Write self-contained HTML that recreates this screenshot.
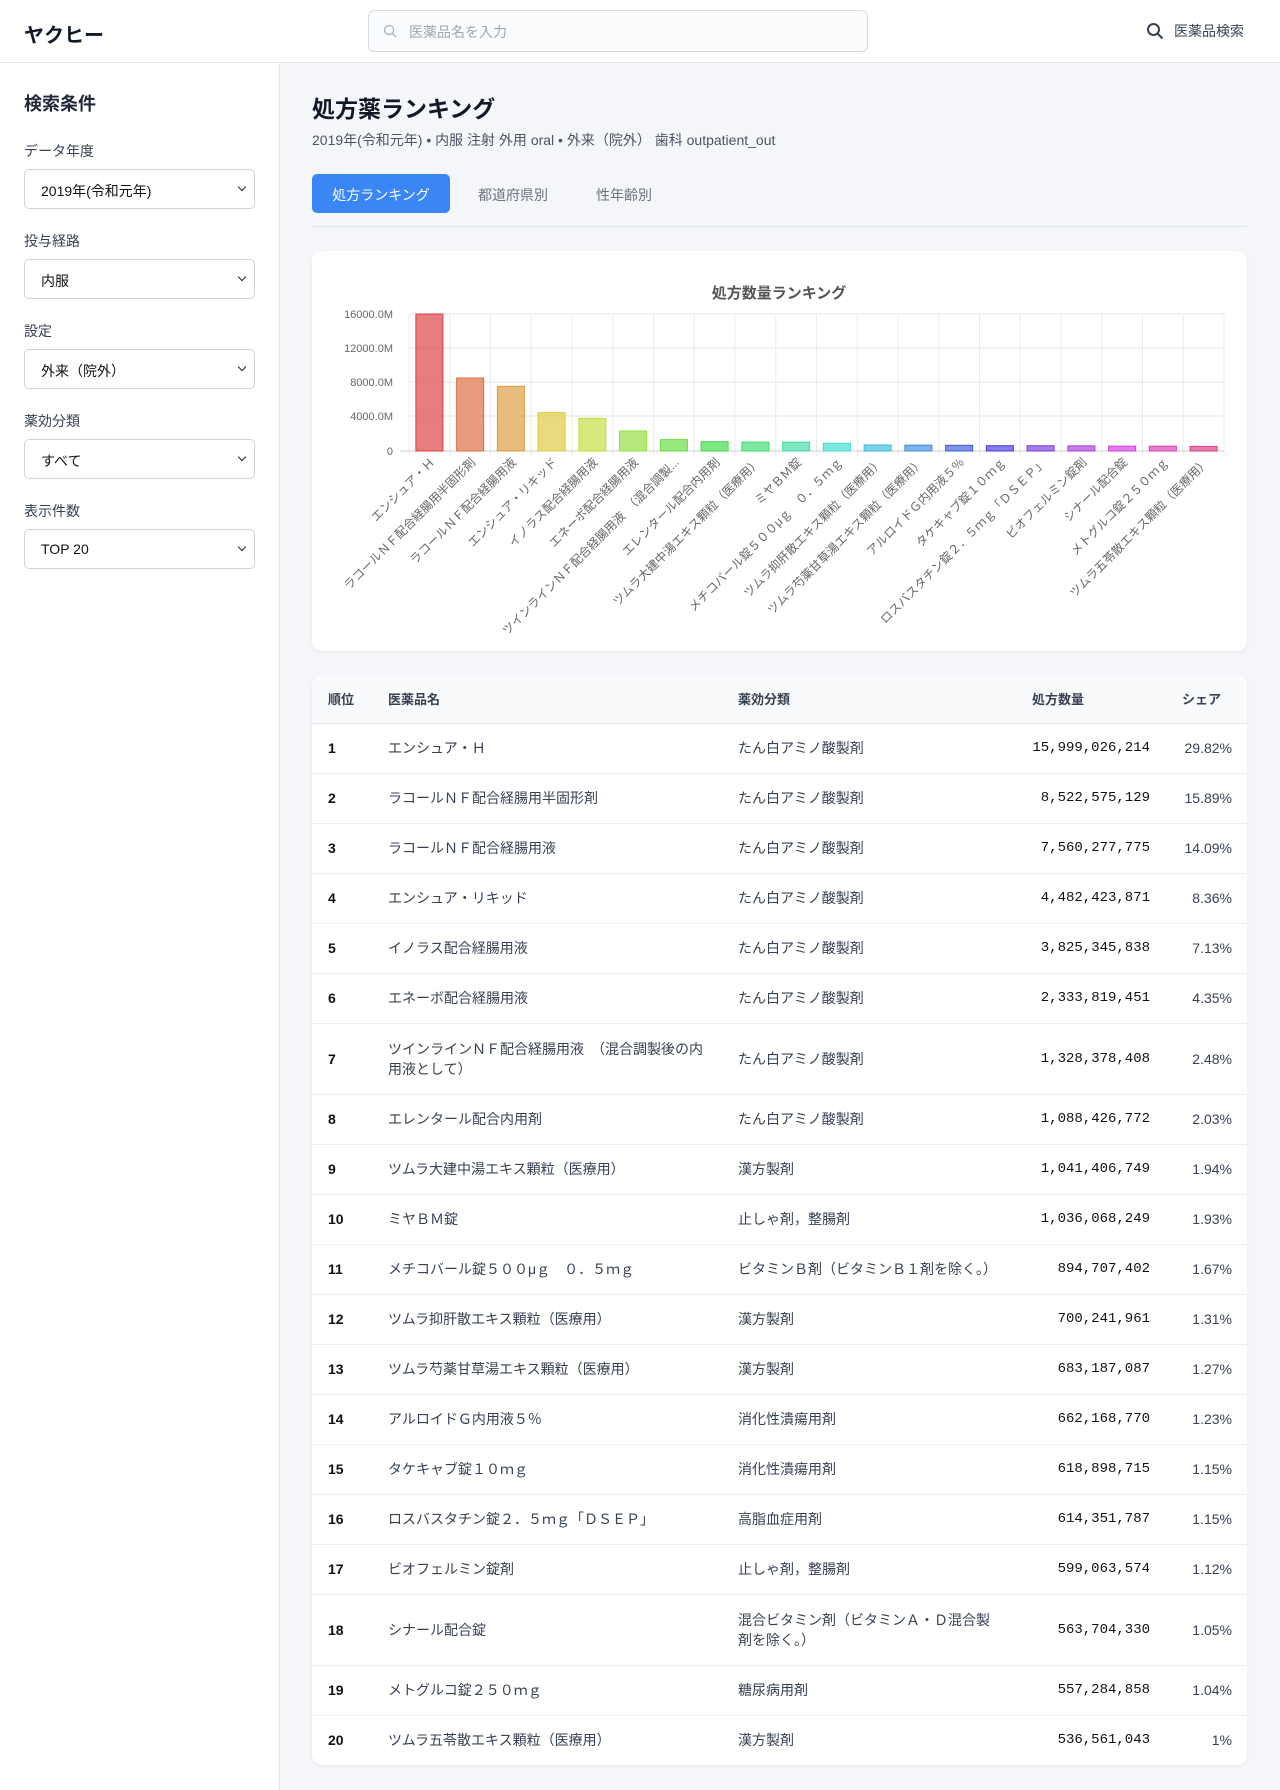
<!DOCTYPE html>
<html><head><meta charset="utf-8">
<style>
*{box-sizing:border-box;margin:0;padding:0}
body{width:1280px;height:1790px;overflow:hidden;background:#f5f6f9;font-family:"Liberation Sans","Noto Sans CJK JP",sans-serif;color:#1f2937}
.hdr{position:absolute;left:0;top:0;width:1280px;height:63px;background:#fff;border-bottom:1px solid #e5e7eb}
.logo{position:absolute;left:24px;top:19px;font-size:20px;font-weight:bold;color:#111827}
.search{position:absolute;left:368px;top:10px;width:500px;height:42px;border:1px solid #d9dde3;border-radius:6px;background:#fafbfc}
.search span{position:absolute;left:40px;top:11px;font-size:14px;color:#a0a6b0}
.rs{position:absolute;left:1146px;top:21px;font-size:14px;color:#374151}
.side{position:absolute;left:0;top:63px;width:280px;height:1727px;background:#fff;border-right:1px solid #e5e7eb}
.side h2{position:absolute;left:24px;top:27px;font-size:18px;font-weight:bold}
.lbl{position:absolute;left:24px;font-size:14px;color:#374151}
.sel{position:absolute;left:24px;width:231px;height:40px;border:1px solid #cfd4da;border-radius:5px;background:#fff;font-size:14px;padding:11px 16px;color:#111}
.sel:after{content:"";position:absolute;right:9px;top:14px;width:5px;height:5px;border-right:1.6px solid #222;border-bottom:1.6px solid #222;transform:rotate(45deg)}
h1{position:absolute;left:312px;top:90px;font-size:23px;font-weight:bold;color:#111827}
.sub{position:absolute;left:312px;top:130px;font-size:14px;color:#4b5563}
.tab{position:absolute;top:174px;height:39px;font-size:14px;color:#6b7280;padding-top:11px}
.tab.a{left:312px;width:138px;background:#3b86f5;color:#fff;border-radius:5px;text-align:center}
.sep{position:absolute;left:312px;top:226px;width:935px;height:1px;background:#e1e4e8}
.card{position:absolute;left:312px;width:935px;background:#fff;border-radius:10px;box-shadow:0 1px 3px rgba(0,0,0,.06)}
table{border-collapse:collapse;width:935px;font-size:14px;table-layout:fixed}
th{height:48px;text-align:left;font-size:13px;font-weight:bold;color:#374151;background:#f9fafb;border-bottom:1px solid #e5e7eb}
td{height:50px;border-bottom:1px solid #eceef1;color:#374151}
tr:last-child td{border-bottom:none}
td.r{font-weight:bold;color:#111}
td.n{text-align:right;font-family:"Liberation Mono",monospace;font-size:14px;color:#111;padding-right:0;white-space:nowrap}
td.s{text-align:right;padding-right:15px;font-size:14px}
td.t{line-height:20px}
</style></head><body>
<div class="hdr">
<div class="logo">ヤクヒー</div>
<div class="search"><svg style="position:absolute;left:14px;top:13px" width="15" height="15" viewBox="0 0 16 16"><circle cx="6.5" cy="6.5" r="4.8" fill="none" stroke="#b0b5bd" stroke-width="1.5"/><path d="M10 10l4 4" stroke="#b0b5bd" stroke-width="1.5"/></svg><span>医薬品名を入力</span></div>
<svg style="position:absolute;left:1146px;top:22px" width="18" height="18" viewBox="0 0 18 18"><circle cx="7.5" cy="7.5" r="5.5" fill="none" stroke="#374151" stroke-width="2"/><path d="M11.5 11.5l5 5" stroke="#374151" stroke-width="2"/></svg>
<div class="rs" style="left:1174px">医薬品検索</div>
</div>
<div class="side">
<h2>検索条件</h2>
<div class="lbl" style="top:78px">データ年度</div><div class="sel" style="top:106px">2019年(令和元年)</div>
<div class="lbl" style="top:168px">投与経路</div><div class="sel" style="top:196px">内服</div>
<div class="lbl" style="top:258px">設定</div><div class="sel" style="top:286px">外来（院外）</div>
<div class="lbl" style="top:348px">薬効分類</div><div class="sel" style="top:376px">すべて</div>
<div class="lbl" style="top:438px">表示件数</div><div class="sel" style="top:466px">TOP 20</div>
</div>
<h1>処方薬ランキング</h1>
<div class="sub">2019年(令和元年) • 内服 注射 外用 oral • 外来（院外） 歯科 outpatient_out</div>
<div class="tab a">処方ランキング</div>
<div class="tab" style="left:478px">都道府県別</div>
<div class="tab" style="left:596px">性年齢別</div>
<div class="sep"></div>
<div class="card" style="top:251px;height:400px">
<svg width="935" height="400" viewBox="312 251 935 400" font-family="Liberation Sans,Noto Sans CJK JP,sans-serif">
<text x="779" y="298" text-anchor="middle" font-size="15" font-weight="bold" fill="#555">処方数量ランキング</text>
<g stroke="#e5e5e5" stroke-width="1">
<line x1="409" y1="314" x2="1224" y2="314"/><line x1="409" y1="348" x2="1224" y2="348"/><line x1="409" y1="382" x2="1224" y2="382"/><line x1="409" y1="416" x2="1224" y2="416"/>
</g>
<g id="vg" stroke="#ececec"></g>
<line x1="400" y1="451" x2="1224" y2="451" stroke="#ccc"/>
<g font-size="11" fill="#666" text-anchor="end">
<text x="393" y="318">16000.0M</text><text x="393" y="352">12000.0M</text><text x="393" y="386">8000.0M</text><text x="393" y="420">4000.0M</text><text x="393" y="455">0</text>
</g>
<g id="bars"></g>
<g id="lbls" font-size="12" fill="#666" text-anchor="end"></g>
</svg>
</div>
<div class="card" style="top:675px;height:1090px;overflow:hidden">
<table>
<colgroup><col style="width:76px"><col style="width:350px"><col style="width:286px"><col style="width:126px"><col></colgroup>
<tr><th style="padding-left:16px">順位</th><th>医薬品名</th><th>薬効分類</th><th style="text-align:left;padding-left:8px">処方数量</th><th style="text-align:right;padding-right:26px">シェア</th></tr>
<tbody id="tb"></tbody>
</table>
</div>
<script>
var d=[["エンシュア・Ｈ","たん白アミノ酸製剤","15,999,026,214","29.82%",15999],
["ラコールＮＦ配合経腸用半固形剤","たん白アミノ酸製剤","8,522,575,129","15.89%",8523],
["ラコールＮＦ配合経腸用液","たん白アミノ酸製剤","7,560,277,775","14.09%",7560],
["エンシュア・リキッド","たん白アミノ酸製剤","4,482,423,871","8.36%",4482],
["イノラス配合経腸用液","たん白アミノ酸製剤","3,825,345,838","7.13%",3825],
["エネーボ配合経腸用液","たん白アミノ酸製剤","2,333,819,451","4.35%",2334],
["ツインラインＮＦ配合経腸用液　（混合調製後の内用液として）","たん白アミノ酸製剤","1,328,378,408","2.48%",1328],
["エレンタール配合内用剤","たん白アミノ酸製剤","1,088,426,772","2.03%",1088],
["ツムラ大建中湯エキス顆粒（医療用）","漢方製剤","1,041,406,749","1.94%",1041],
["ミヤＢＭ錠","止しゃ剤，整腸剤","1,036,068,249","1.93%",1036],
["メチコバール錠５００μｇ　０．５ｍｇ","ビタミンＢ剤（ビタミンＢ１剤を除く。）","894,707,402","1.67%",895],
["ツムラ抑肝散エキス顆粒（医療用）","漢方製剤","700,241,961","1.31%",700],
["ツムラ芍薬甘草湯エキス顆粒（医療用）","漢方製剤","683,187,087","1.27%",683],
["アルロイドＧ内用液５％","消化性潰瘍用剤","662,168,770","1.23%",662],
["タケキャブ錠１０ｍｇ","消化性潰瘍用剤","618,898,715","1.15%",619],
["ロスバスタチン錠２．５ｍｇ「ＤＳＥＰ」","高脂血症用剤","614,351,787","1.15%",614],
["ビオフェルミン錠剤","止しゃ剤，整腸剤","599,063,574","1.12%",599],
["シナール配合錠","混合ビタミン剤（ビタミンＡ・Ｄ混合製剤を除く。）","563,704,330","1.05%",564],
["メトグルコ錠２５０ｍｇ","糖尿病用剤","557,284,858","1.04%",557],
["ツムラ五苓散エキス顆粒（医療用）","漢方製剤","536,561,043","1%",537]];
var h="",b="",l="",v="";
d.forEach(function(r,i){
var tall=(i==6||i==17);
h+='<tr><td class="r" style="padding-left:16px'+(tall?';height:71px':'')+'">'+(i+1)+'</td><td class="t" style="padding-right:26px">'+r[0]+'</td><td class="t" style="padding-right:30px">'+r[1]+'</td><td class="n">'+r[2]+'</td><td class="s">'+r[3]+'</td></tr>';
var w=40.75,cx=409+w*(i+0.5),bh=r[4]/16000*137,hue=i*17.5;
b+='<rect x="'+(cx-13.5)+'" y="'+(451-bh)+'" width="27" height="'+bh+'" fill="hsla('+hue+',70%,60%,0.75)" stroke="hsl('+hue+',70%,55%)" stroke-width="1"/>';
v+='<line x1="'+(409+w*i)+'" y1="314" x2="'+(409+w*i)+'" y2="456"/>';
var t=r[0];if(i==6)t="ツインラインＮＦ配合経腸用液　（混合調製...";
l+='<text transform="translate('+(cx+6)+',463) rotate(-45)">'+t+'</text>';
});
v+='<line x1="1224" y1="314" x2="1224" y2="456"/>';
document.getElementById("tb").innerHTML=h;
document.getElementById("bars").innerHTML=b;
document.getElementById("lbls").innerHTML=l;
document.getElementById("vg").innerHTML=v;
</script>
</body></html>
